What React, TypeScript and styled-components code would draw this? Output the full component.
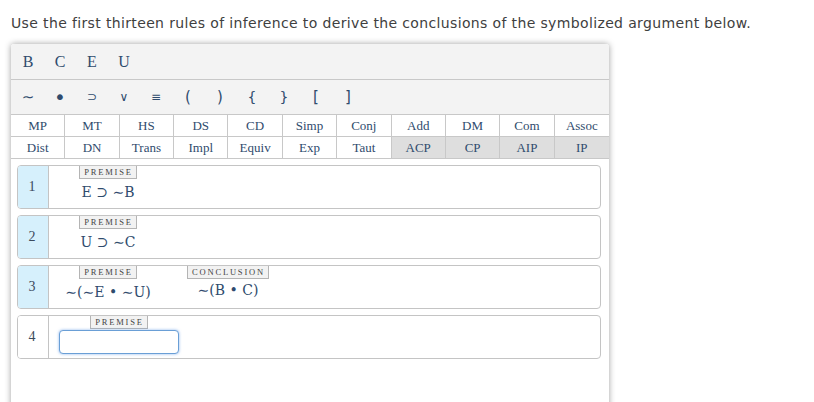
import React from "react";
import styled, { createGlobalStyle } from "styled-components";

const Global = createGlobalStyle`
  html, body { margin: 0; padding: 0; overflow: hidden; background: #fff; }
  body { font-family: "DejaVu Sans", Verdana, sans-serif; }
`;

const NAVY = "#2f4b6d";
const SERIF = `"Liberation Serif", "Times New Roman", serif`;
const FSERIF = `"DejaVu Serif", "Liberation Serif", serif`;

const Page = styled.div`
  padding: 14px 0 0 11px;
`;

const Instruction = styled.p`
  margin: 0;
  font-size: 14px;
  line-height: 19px;
  letter-spacing: 0.36px;
  color: #404040;
  font-family: "DejaVu Sans", Verdana, sans-serif;
`;

const Panel = styled.div`
  margin-top: 11px;
  width: 598px;
  height: 380px;
  background: #fff;
  border-radius: 3px 3px 0 0;
  box-shadow: 0 0 6px rgba(0, 0, 0, 0.38);
  overflow: hidden;
`;

const Toolbar = styled.div<{ $height: number }>`
  display: flex;
  align-items: center;
  height: ${(p) => p.$height}px;
  padding-left: 1px;
  background: #f3f3f3;
  border-bottom: 1px solid #c8c8c8;
`;

const ToolButton = styled.button<{ $sans?: boolean; $size: number }>`
  width: 32px;
  height: 100%;
  padding: 0;
  border: none;
  background: transparent;
  color: ${NAVY};
  font-family: ${(p) => (p.$sans ? `"DejaVu Sans", Verdana, sans-serif` : SERIF)};
  font-size: ${(p) => p.$size}px;
  text-align: center;
  cursor: pointer;
`;

const RuleGrid = styled.div`
  display: grid;
  grid-template-columns: repeat(11, 1fr);
  background: #fff;
`;

const RuleCell = styled.button<{ $grey?: boolean; $last?: boolean }>`
  height: 22px;
  padding: 0;
  border: none;
  border-right: ${(p) => (p.$last ? "none" : "1px solid #c8c8c8")};
  border-bottom: 1px solid #c8c8c8;
  background: ${(p) => (p.$grey ? "#dedede" : "#fff")};
  color: ${NAVY};
  font-family: ${SERIF};
  font-size: 13px;
  text-align: center;
`;

const Lines = styled.div`
  display: flex;
  flex-direction: column;
  gap: 6px;
  padding: 6px 8px 0 6px;
`;

const LineRow = styled.div`
  display: flex;
  height: 42px;
  border: 1px solid #c4c4c4;
  border-radius: 4px;
  overflow: hidden;
`;

const LineNumber = styled.div<{ $given: boolean }>`
  flex: 0 0 31px;
  display: flex;
  align-items: center;
  justify-content: center;
  padding-right: 2px;
  box-sizing: border-box;
  background: ${(p) => (p.$given ? "#d6f0fc" : "#fff")};
  border-right: 1px solid #c4c4c4;
  color: #3b4a5c;
  font-family: ${SERIF};
  font-size: 14px;
`;

const LineBody = styled.div`
  display: flex;
  gap: 22px;
  padding-left: 10px;
`;

const Column = styled.div`
  display: flex;
  flex-direction: column;
  align-items: center;
  min-width: 98px;
`;

const Tag = styled.span`
  display: inline-block;
  padding: 0 3px 0 4px;
  height: 12px;
  line-height: 12px;
  background: #f2f2f2;
  border: 1px solid #b4b4b4;
  border-top: none;
  color: #444;
  font-family: ${SERIF};
  font-size: 8.5px;
  letter-spacing: 1.8px;
`;

const Formula = styled.span<{ $raise?: number }>`
  margin-top: ${(p) => 4 - (p.$raise || 0)}px;
  color: ${NAVY};
  font-family: ${FSERIF};
  font-size: 14px;
  line-height: 18px;
  white-space: pre;
  padding: 0 5px;
`;

const LineInput = styled.input`
  box-sizing: border-box;
  margin-top: 1px;
  width: 120px;
  height: 24px;
  border: 1px solid #6a9fd6;
  border-radius: 4px;
  box-shadow: 0 0 3px rgba(90, 150, 230, 0.7);
  outline: none;
  font-family: ${FSERIF};
  font-size: 14px;
  color: ${NAVY};
`;

const letters = ["B", "C", "E", "U"];
const symbols: { s: string; size: number }[] = [
  { s: "∼", size: 15 },
  { s: "•", size: 20 },
  { s: "⊃", size: 12 },
  { s: "∨", size: 12 },
  { s: "≡", size: 12 },
  { s: "(", size: 15 },
  { s: ")", size: 15 },
  { s: "{", size: 14 },
  { s: "}", size: 14 },
  { s: "[", size: 15 },
  { s: "]", size: 15 },
];
const rules1 = ["MP", "MT", "HS", "DS", "CD", "Simp", "Conj", "Add", "DM", "Com", "Assoc"];
const rules2 = ["Dist", "DN", "Trans", "Impl", "Equiv", "Exp", "Taut", "ACP", "CP", "AIP", "IP"];

export default function App() {
  return (
    <>
      <Global />
      <Page>
        <Instruction>
          Use the first thirteen rules of inference to derive the conclusions of the symbolized argument below.
        </Instruction>
        <Panel>
          <Toolbar $height={35}>
            {letters.map((l) => (
              <ToolButton key={l} $size={16}>
                {l}
              </ToolButton>
            ))}
          </Toolbar>
          <Toolbar $height={34}>
            {symbols.map((x) => (
              <ToolButton key={x.s} $sans $size={x.size}>
                {x.s}
              </ToolButton>
            ))}
          </Toolbar>
          <RuleGrid>
            {rules1.map((r, i) => (
              <RuleCell key={r} $last={i === 10}>
                {r}
              </RuleCell>
            ))}
            {rules2.map((r, i) => (
              <RuleCell key={r} $last={i === 10} $grey={i >= 7}>
                {r}
              </RuleCell>
            ))}
          </RuleGrid>
          <Lines>
            <LineRow>
              <LineNumber $given>1</LineNumber>
              <LineBody>
                <Column>
                  <Tag>PREMISE</Tag>
                  <Formula>E ⊃ ∼B</Formula>
                </Column>
              </LineBody>
            </LineRow>
            <LineRow>
              <LineNumber $given>2</LineNumber>
              <LineBody>
                <Column>
                  <Tag>PREMISE</Tag>
                  <Formula>U ⊃ ∼C</Formula>
                </Column>
              </LineBody>
            </LineRow>
            <LineRow>
              <LineNumber $given>3</LineNumber>
              <LineBody>
                <Column>
                  <Tag>PREMISE</Tag>
                  <Formula>∼(∼E • ∼U)</Formula>
                </Column>
                <Column>
                  <Tag>CONCLUSION</Tag>
                  <Formula $raise={2}>∼(B • C)</Formula>
                </Column>
              </LineBody>
            </LineRow>
            <LineRow>
              <LineNumber $given={false}>4</LineNumber>
              <LineBody>
                <Column>
                  <Tag>PREMISE</Tag>
                  <LineInput />
                </Column>
              </LineBody>
            </LineRow>
          </Lines>
        </Panel>
      </Page>
    </>
  );
}
